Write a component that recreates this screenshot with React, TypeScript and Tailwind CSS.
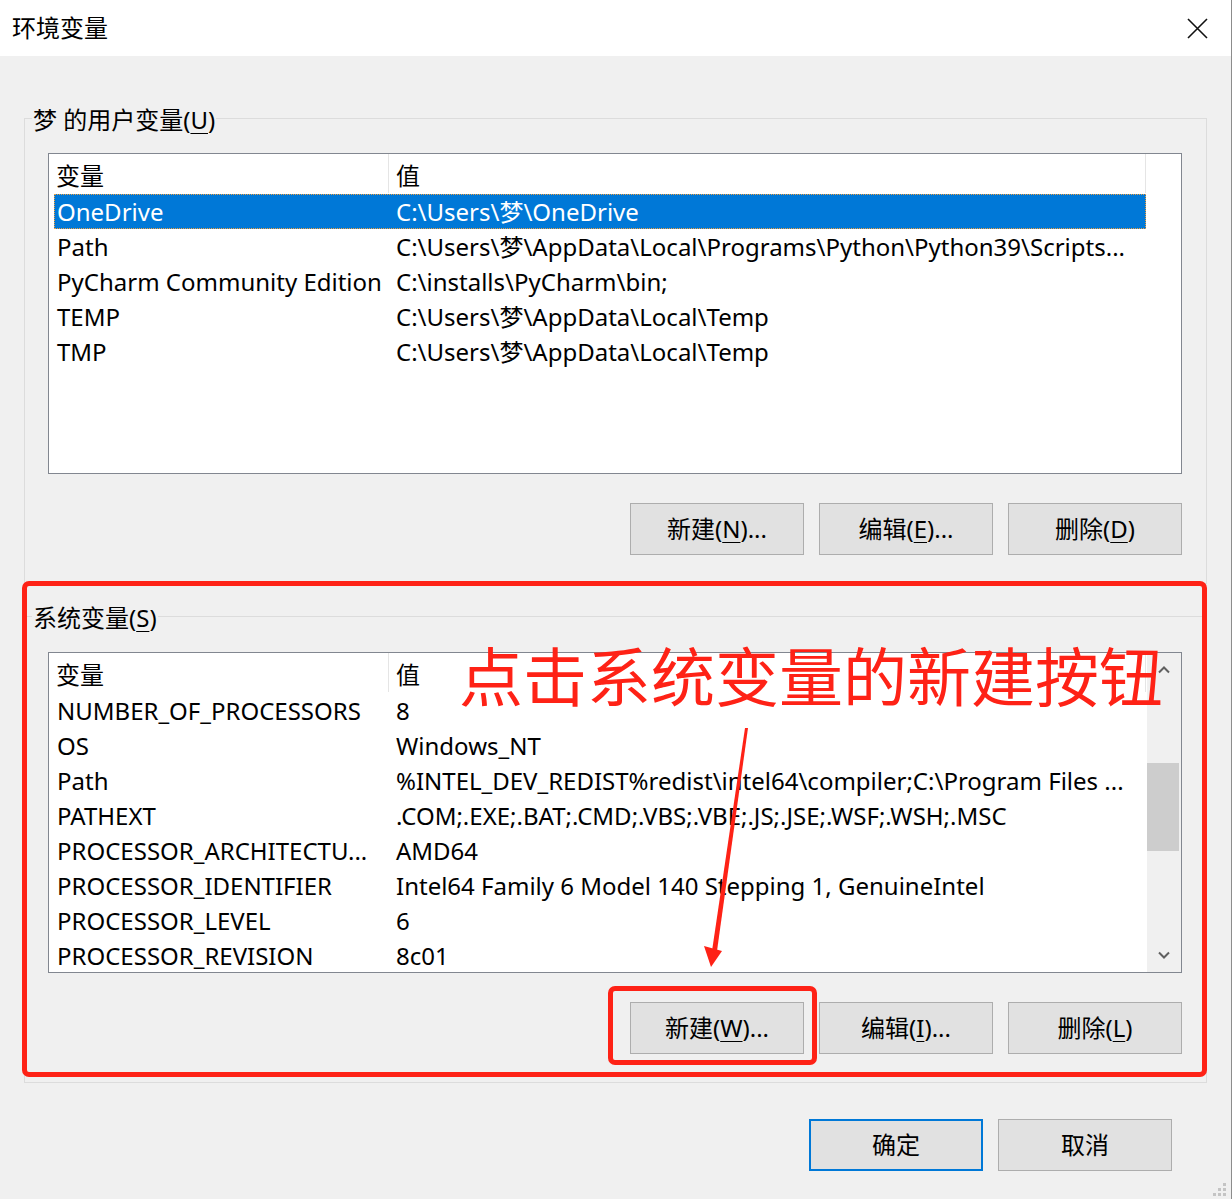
type Row = { name: string; value: string }

const userVars: Row[] = [
  { name: 'OneDrive', value: 'C:\\Users\\梦\\OneDrive' },
  {
    name: 'Path',
    value: 'C:\\Users\\梦\\AppData\\Local\\Programs\\Python\\Python39\\Scripts...',
  },
  { name: 'PyCharm Community Edition', value: 'C:\\installs\\PyCharm\\bin;' },
  { name: 'TEMP', value: 'C:\\Users\\梦\\AppData\\Local\\Temp' },
  { name: 'TMP', value: 'C:\\Users\\梦\\AppData\\Local\\Temp' },
]

const systemVars: Row[] = [
  { name: 'NUMBER_OF_PROCESSORS', value: '8' },
  { name: 'OS', value: 'Windows_NT' },
  {
    name: 'Path',
    value: '%INTEL_DEV_REDIST%redist\\intel64\\compiler;C:\\Program Files ...',
  },
  { name: 'PATHEXT', value: '.COM;.EXE;.BAT;.CMD;.VBS;.VBE;.JS;.JSE;.WSF;.WSH;.MSC' },
  { name: 'PROCESSOR_ARCHITECTU...', value: 'AMD64' },
  {
    name: 'PROCESSOR_IDENTIFIER',
    value: 'Intel64 Family 6 Model 140 Stepping 1, GenuineIntel',
  },
  { name: 'PROCESSOR_LEVEL', value: '6' },
  { name: 'PROCESSOR_REVISION', value: '8c01' },
]

function Key({ k }: { k: string }) {
  return <span className="underline decoration-1 underline-offset-[4px]">{k}</span>
}

function WinButton({
  label,
  hotkey,
  dots = false,
  primary = false,
}: {
  label: string
  hotkey?: string
  dots?: boolean
  primary?: boolean
}) {
  return (
    <button
      type="button"
      className={
        primary
          ? 'flex h-[52px] w-[174px] items-center justify-center border-2 border-[#0078d7] bg-[#e1e1e1] text-[24px] leading-[30px] text-black'
          : 'flex h-[52px] w-[174px] items-center justify-center border border-[#adadad] bg-[#e1e1e1] text-[24px] leading-[30px] text-black'
      }
    >
      {label}
      {hotkey && (
        <>
          (<Key k={hotkey} />)
        </>
      )}
      {dots && '...'}
    </button>
  )
}

function Chevron({ down = false }: { down?: boolean }) {
  return (
    <svg width="12" height="8" viewBox="0 0 12 8" className="text-[#606060]">
      <path
        d={down ? 'M1 1.5 L6 6.5 L11 1.5' : 'M1 6.5 L6 1.5 L11 6.5'}
        fill="none"
        stroke="currentColor"
        strokeWidth="2"
      />
    </svg>
  )
}

function VarList({
  rows,
  selected,
  scrollbar = false,
}: {
  rows: Row[]
  selected?: number
  scrollbar?: boolean
}) {
  return (
    <div className="flex h-[321px] w-[1134px] border border-[#828790] bg-white">
      <div className="w-[1098px] overflow-hidden">
        <div className="flex h-[40px] text-[24px] leading-[30px]">
          <div className="flex h-[39px] w-[340px] items-center border-r border-[#e5e5e5] pl-[7px] pt-[4px]">
            变量
          </div>
          <div className="flex h-[39px] w-[757px] items-center border-r border-[#e5e5e5] pl-[7px] pt-[4px]">
            值
          </div>
        </div>
        {rows.map((row, index) => (
          <div
            key={row.name + index}
            className={
              index === selected
                ? 'ml-[5px] flex h-[35px] w-[1092px] items-center bg-[#0078d7] text-white outline-1 -outline-offset-1 outline-dotted outline-[#f0a040]'
                : 'ml-[5px] flex h-[35px] w-[1092px] items-center text-black'
            }
          >
            <div className="w-[334px] overflow-hidden whitespace-nowrap pl-[3px] text-[24px] leading-[33px]">
              {row.name}
            </div>
            <div className="w-[758px] overflow-hidden whitespace-nowrap pl-[8px] text-[24px] leading-[33px]">
              {row.value}
            </div>
          </div>
        ))}
      </div>
      {scrollbar && (
        <div className="flex w-[34px] flex-col bg-[#f0f0f0]">
          <div className="flex h-[34px] items-center justify-center">
            <Chevron />
          </div>
          <div className="flex-1 pt-[76px]">
            <div className="h-[88px] w-[32px] bg-[#cdcdcd]" />
          </div>
          <div className="flex h-[34px] items-center justify-center">
            <Chevron down />
          </div>
        </div>
      )}
    </div>
  )
}

function Group({
  title,
  hotkey,
  rows,
  selected,
  scrollbar,
  buttons,
  top,
}: {
  title: string
  hotkey: string
  rows: Row[]
  selected?: number
  scrollbar?: boolean
  buttons: [string, string, boolean][]
  top: string
}) {
  return (
    <fieldset className={`w-[1183px] border border-[#dcdcdc] pb-[28px] pl-[7px] pr-[24px] ${top}`}>
      <legend className="px-[1px] text-[24px] leading-[32px] text-black">
        <span className="relative top-[2px]">
          {title}(<Key k={hotkey} />)
        </span>
      </legend>
      <div className="ml-[16px]">
        <VarList rows={rows} selected={selected} scrollbar={scrollbar} />
        <div className="mt-[29px] flex justify-end gap-[15px]">
          {buttons.map(([label, key, dots]) => (
            <WinButton key={label} label={label} hotkey={key} dots={dots} />
          ))}
        </div>
      </div>
    </fieldset>
  )
}

function App() {
  return (
    <div className="relative flex h-[1199px] w-[1232px] flex-col overflow-hidden border-r border-[#8c8c8c] bg-[#f0f0f0] font-['Noto_Sans','Noto_Sans_CJK_SC',sans-serif] text-black">
      <div className="flex h-[56px] items-center justify-between bg-white pl-[12px] pr-[23px]">
        <span className="text-[24px] leading-[30px]">环境变量</span>
        <svg width="21" height="21" viewBox="0 0 21 21">
          <path d="M1 1 L20 20 M20 1 L1 20" stroke="#111" strokeWidth="1.6" />
        </svg>
      </div>

      <div className="flex flex-col pl-[24px]">
        <div className="mt-[46px]">
          <Group
            title="梦 的用户变量"
            hotkey="U"
            rows={userVars}
            selected={0}
            top="pt-[19px]"
            buttons={[
              ['新建', 'N', true],
              ['编辑', 'E', true],
              ['删除', 'D', false],
            ]}
          />
        </div>
        <div className="mt-[16px]">
          <Group
            title="系统变量"
            hotkey="S"
            rows={systemVars}
            scrollbar
            top="pt-[20px]"
            buttons={[
              ['新建', 'W', true],
              ['编辑', 'I', true],
              ['删除', 'L', false],
            ]}
          />
        </div>
      </div>

      <div className="mt-[36px] flex justify-end gap-[15px] pr-[59px]">
        <WinButton label="确定" primary />
        <WinButton label="取消" />
      </div>

      {/* resize grip */}
      <svg width="14" height="14" viewBox="0 0 14 14" className="absolute bottom-[2px] right-[4px]">
        <rect x="10" y="0" width="3" height="3" fill="#c4c4c4" />
        <rect x="5" y="5" width="3" height="3" fill="#c4c4c4" />
        <rect x="10" y="5" width="3" height="3" fill="#c4c4c4" />
        <rect x="0" y="10" width="3" height="3" fill="#c4c4c4" />
        <rect x="5" y="10" width="3" height="3" fill="#c4c4c4" />
        <rect x="10" y="10" width="3" height="3" fill="#c4c4c4" />
      </svg>

      {/* red annotations */}
      <div className="pointer-events-none absolute left-[22px] top-[581px] h-[496px] w-[1185px] rounded-[7px] border-[5px] border-[#fe2216]" />
      <div className="pointer-events-none absolute left-[608px] top-[986px] h-[79px] w-[209px] rounded-[7px] border-[5px] border-[#fe2216]" />
      <div className="pointer-events-none absolute left-[459px] top-[638px] whitespace-nowrap font-['Noto_Sans_CJK_SC',sans-serif] text-[64px] leading-[70px] text-[#fe2216]">
        点击系统变量的新建按钮
      </div>
      <svg
        width="60"
        height="250"
        viewBox="0 0 60 250"
        className="pointer-events-none absolute left-[700px] top-[725px]"
      >
        <polygon points="45,3 48,3 17,226 12,226" fill="#fe2216" />
        <polygon points="4,221 22,226 11,242" fill="#fe2216" />
      </svg>
    </div>
  )
}

export default App
